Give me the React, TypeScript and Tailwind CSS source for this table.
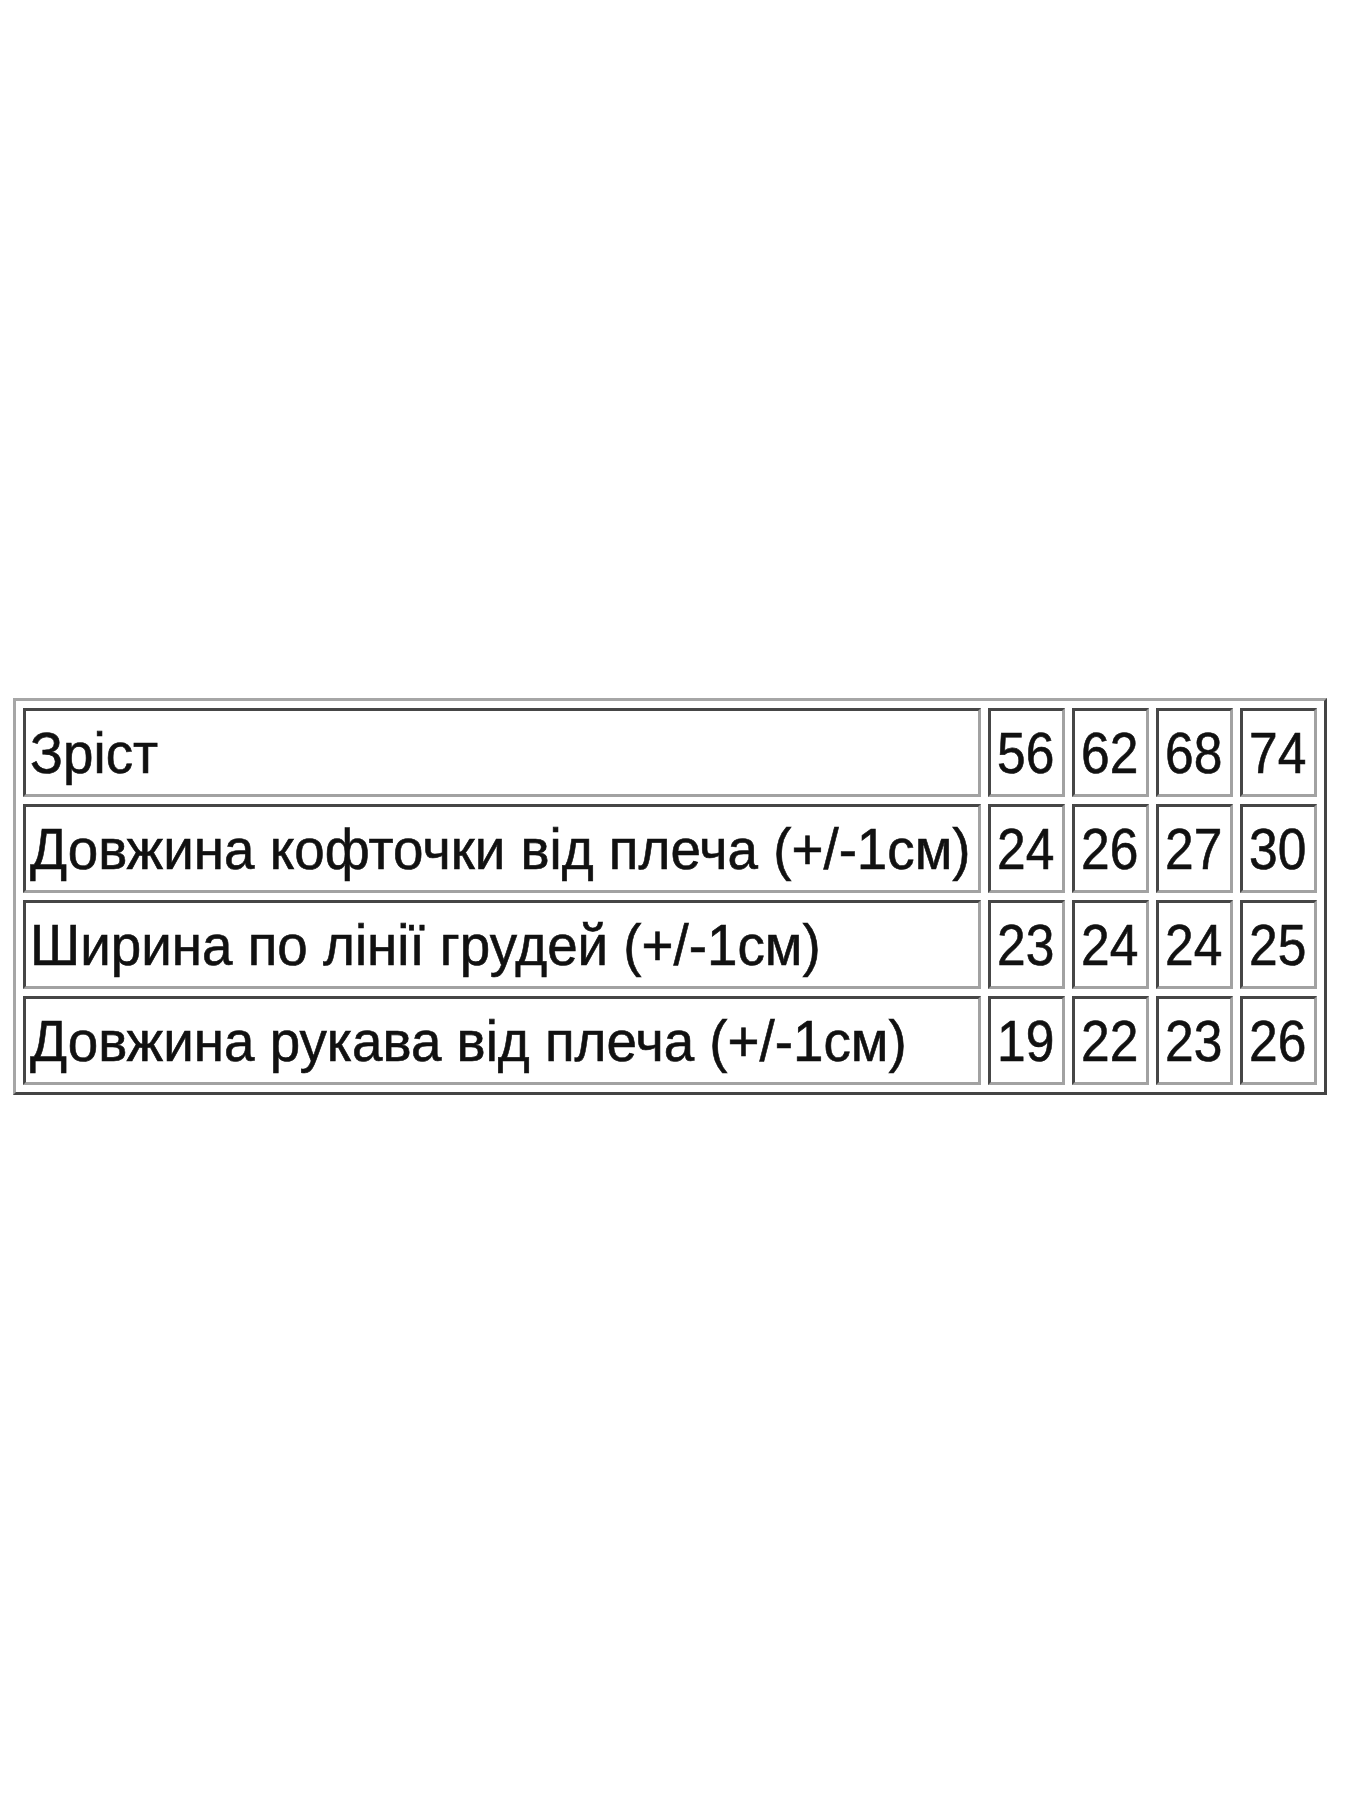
import React from "react";

const rows: [string, string[]][] = [
  ["Зріст", ["56", "62", "68", "74"]],
  ["Довжина кофточки від плеча (+/-1см)", ["24", "26", "27", "30"]],
  ["Ширина по лінії грудей (+/-1см)", ["23", "24", "24", "25"]],
  ["Довжина рукава від плеча (+/-1см)", ["19", "22", "23", "26"]],
];

const cell =
  "h-[89px] p-0 border-[3px] border-solid border-t-[#464646] border-l-[#464646] border-r-[#a2a2a2] border-b-[#a2a2a2] align-middle text-left";

export default function App() {
  return (
    <div className="w-[1350px] h-[1800px] bg-white pt-[698px] pl-[13px]" style={{ fontFamily: '"Liberation Sans", Arial, sans-serif' }}>
      <table className="blur-[0.5px] border-separate border-spacing-[7px] border-[3px] border-solid border-t-[#a6a6a6] border-l-[#a6a6a6] border-r-[#444] border-b-[#444] text-[46px] leading-none text-[#111] [-webkit-text-stroke:0.5px_#111]">
        <tbody>
          {rows.map(([label, vals]) => (
            <tr key={label}>
              <td className={`${cell} w-[958px] pl-[4px]`}>
                <span className="inline-block origin-left scale-x-[1.19] scale-y-[1.24] whitespace-nowrap">{label}</span>
              </td>
              {vals.map((v, i) => (
                <td key={i} className={`${cell} w-[77px] pl-[6px]`}>
                  <span className="inline-block origin-left scale-x-[1.12] scale-y-[1.24]">{v}</span>
                </td>
              ))}
            </tr>
          ))}
        </tbody>
      </table>
    </div>
  );
}
